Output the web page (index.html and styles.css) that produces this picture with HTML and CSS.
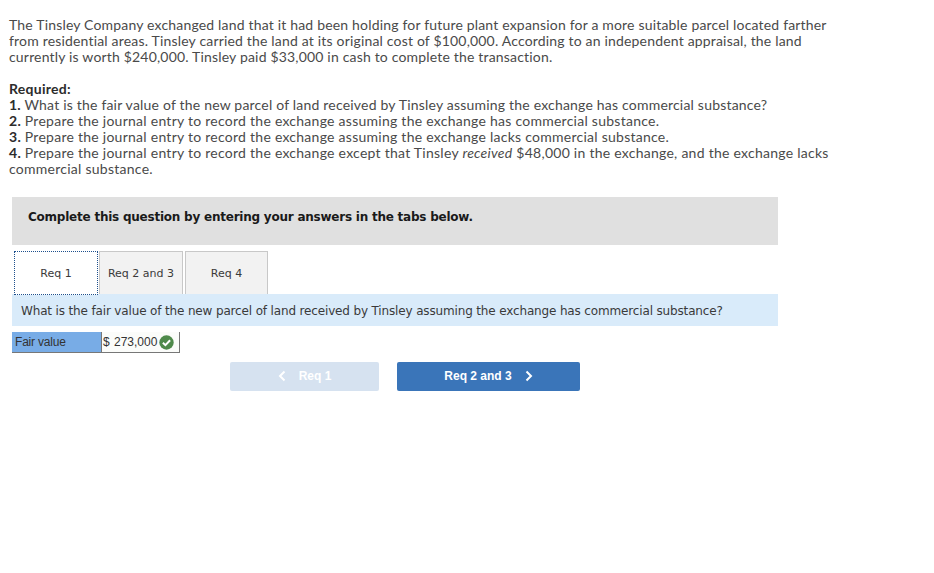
FILE: index.html
```html
<!DOCTYPE html>
<html lang="en">
<head>
<meta charset="utf-8">
<title>Tinsley Company</title>
<link rel="stylesheet" href="styles.css">
</head>
<body>
<div class="problem">
  <p class="para">The Tinsley Company exchanged land that it had been holding for future plant expansion for a more suitable parcel located farther<br>from residential areas. Tinsley carried the land at its original cost of $100,000. According to an independent appraisal, the land<br>currently is worth $240,000. Tinsley paid $33,000 in cash to complete the transaction.</p>
  <p class="para req"><b>Required:</b><br><span class="first"><b>1.</b> What is the fair value of the new parcel of land received by Tinsley assuming the exchange has commercial substance?</span><br><b>2.</b> Prepare the journal entry to record the exchange assuming the exchange has commercial substance.<br><b>3.</b> Prepare the journal entry to record the exchange assuming the exchange lacks commercial substance.<br><b>4.</b> Prepare the journal entry to record the exchange except that Tinsley <i>received</i> $48,000 in the exchange, and the exchange lacks<br>commercial substance.</p>
</div>
<div class="panel">
  <div class="banner">Complete this question by entering your answers in the tabs below.</div>
  <div class="tabs">
    <div class="tab tab-active">Req 1</div>
    <div class="tab tab-mid">Req 2 and 3</div>
    <div class="tab tab-last">Req 4</div>
  </div>
  <div class="question">What is the fair value of the new parcel of land received by Tinsley assuming the exchange has commercial substance?</div>
  <div class="answer">
    <div class="label">Fair value</div>
    <div class="value"><span>$ 273,000</span>
      <svg class="check" viewBox="0 0 15 15" width="15" height="15" aria-hidden="true"><circle cx="7.5" cy="7.5" r="7.2" fill="#4f8a4b"/><path d="M3.9 7.8 6.4 10.2 11.1 5.3" fill="none" stroke="#fff" stroke-width="2"/></svg>
    </div>
  </div>
  <div class="nav">
    <div class="btn btn-prev">
      <svg class="chev" viewBox="0 0 8 12" width="8" height="12" aria-hidden="true"><path d="M6.5 1.5 2 6l4.500 4.500" fill="none" stroke="#fff" stroke-width="2"/></svg>
      <span>Req 1</span>
    </div>
    <div class="btn btn-next">
      <span>Req 2 and 3</span>
      <svg class="chev" viewBox="0 0 8 12" width="8" height="12" aria-hidden="true"><path d="M1.500 1.500 6 6l-4.500 4.500" fill="none" stroke="#fff" stroke-width="2"/></svg>
    </div>
  </div>
</div>
</body>
</html>
```
FILE: styles.css
```css
html, body { margin: 0; padding: 0; background: #fff; }
body { width: 934px; height: 573px; overflow: hidden; }
.problem {
  padding: 17px 0 0 9px;
  font-family: "Lato", "Liberation Sans", sans-serif;
  font-size: 14px;
  line-height: 16px;
  color: #4a4a4a;
  letter-spacing: 0.18px;
  white-space: nowrap;
}
.para { margin: 0 0 16px; }
.req { margin-bottom: 20px; letter-spacing: 0.26px; }
.req .first { letter-spacing: 0.2px; }
.req b { color: #2c2c2c; }
.panel { margin-left: 12px; width: 766px; }
.banner {
  height: 48px;
  background: #e0e0e0;
  padding-left: 16px;
  font: bold 12px/40px "DejaVu Sans", sans-serif;
  letter-spacing: -0.23px;
  color: #1a1a1a;
}
.tabs { display: flex; margin-top: 6px; padding-left: 2px; height: 43px; }
.tab {
  box-sizing: border-box;
  height: 43px;
  display: flex;
  align-items: center;
  justify-content: center;
  font: 11px "DejaVu Sans", sans-serif;
  color: #3a3a3a;
  background: #f2f2f2;
  border: 1px solid #c8c8c8;
  border-bottom: 0;
}
.tab-active {
  width: 84px;
  height: 44px;
  background: #fff;
  border: 1px dotted #1d4f8c;
  margin-right: 1px;
  position: relative;
  z-index: 1;
}
.tab-mid { width: 84px; margin-right: 2px; }
.tab-last { width: 83px; }
.question {
  height: 32px;
  background: #d9ebfa;
  padding-left: 9px;
  font: 12px/34px "DejaVu Sans", sans-serif;
  letter-spacing: -0.15px;
  color: #3a3a3a;
}
.answer { display: flex; margin-top: 6px; height: 21px; font: 12px "Liberation Sans", sans-serif; color: #333; }
.label {
  box-sizing: border-box;
  width: 90px;
  background: #78ace6;
  padding-left: 3px;
  line-height: 20px;
  letter-spacing: -0.2px;
  border-bottom: 1px solid #777;
  border-right: 1px solid #777;
}
.value {
  box-sizing: border-box;
  width: 78px;
  display: flex;
  align-items: center;
  gap: 2px;
  padding-left: 1px;
  background: #fbfcfa;
  word-spacing: 1px;
  border-bottom: 1px solid #777;
  border-right: 1px solid #777;
}
.check { display: block; flex: none; }
.nav { display: flex; margin: 9px 0 0 218px; gap: 18px; }
.btn {
  box-sizing: border-box;
  height: 29px;
  padding-bottom: 2px;
  border-radius: 2px;
  display: flex;
  align-items: center;
  justify-content: center;
  font: bold 12px "Liberation Sans", sans-serif;
  color: #fff;
}
.btn-prev { width: 149px; background: #d6e2f0; gap: 13px; }
.btn-next { width: 183px; background: #3a75b9; gap: 13px; }
.chev { display: block; flex: none; }
```
